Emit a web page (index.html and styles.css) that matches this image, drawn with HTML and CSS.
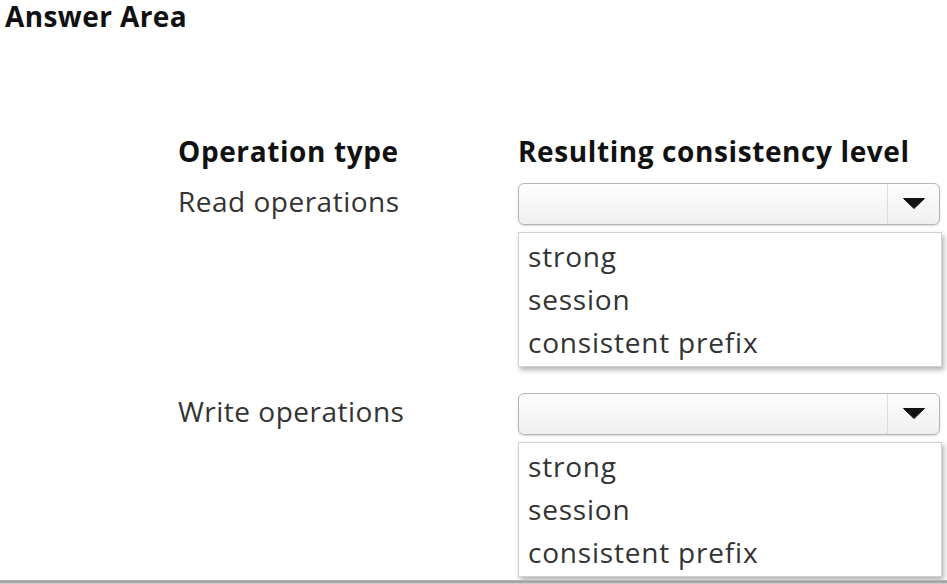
FILE: index.html
```html
<!DOCTYPE html>
<html>
<head>
<meta charset="utf-8">
<link rel="stylesheet" href="styles.css">
</head>
<body>
<div class="page">
  <h1 class="title">Answer Area</h1>
  <div class="grid">
    <div class="head">Operation type</div>
    <div class="head">Resulting consistency level</div>

    <div class="label">Read operations</div>
    <div class="group">
      <div class="select"><span class="value"></span><span class="btn"><svg width="22" height="11" viewBox="0 0 22 11"><path d="M0.5 0.5H21.5L11 10.5Z" fill="#111" stroke="#111" stroke-linejoin="round"/></svg></span></div>
      <ul class="list">
        <li>strong</li>
        <li>session</li>
        <li>consistent prefix</li>
      </ul>
    </div>

    <div class="label">Write operations</div>
    <div class="group">
      <div class="select"><span class="value"></span><span class="btn"><svg width="22" height="11" viewBox="0 0 22 11"><path d="M0.5 0.5H21.5L11 10.5Z" fill="#111" stroke="#111" stroke-linejoin="round"/></svg></span></div>
      <ul class="list">
        <li>strong</li>
        <li>session</li>
        <li>consistent prefix</li>
      </ul>
    </div>
  </div>
</div>
<div class="bottom-line"></div>
</body>
</html>
```

FILE: styles.css
```css
html, body {
  margin: 0;
  padding: 0;
  background: #fff;
  width: 947px;
  height: 584px;
  overflow: hidden;
  position: relative;
}
.page {
  font-family: "Open Sans", "Noto Sans", sans-serif;
  color: #222;
}
.title {
  margin: 0;
  padding: 0 0 0 5px;
  font-size: 28px;
  font-weight: 700;
  line-height: 32px;
  letter-spacing: 0.4px;
  color: #111;
}
.grid {
  display: grid;
  grid-template-columns: 340px 429px;
  margin: 101px 0 0 178px;
  align-items: start;
}
.head {
  font-size: 28px;
  font-weight: 700;
  line-height: 36px;
  letter-spacing: 0.6px;
  color: #111;
}
.label {
  font-size: 28px;
  line-height: 36px;
  letter-spacing: 0.5px;
  color: #333;
  margin-top: 14px;
}
.group {
  margin-top: 14px;
  margin-bottom: 12px;
}
.select {
  display: flex;
  height: 40px;
  width: 420px;
  border: 1px solid #b4b4b4;
  border-radius: 6px;
  background: linear-gradient(#fdfdfd, #f0f0f0);
  box-shadow: 0 1px 2px rgba(0,0,0,0.15);
}
.value { flex: 1; }
.btn {
  width: 51px;
  border-left: 1px solid #dcdcdc;
  display: flex;
  align-items: center;
  justify-content: center;
  padding-bottom: 1px;
}
.list {
  list-style: none;
  margin: 7px 0 0 0;
  padding: 2px 0 2px 9px;
  width: 413px;
  border: 1px solid #d0d0d0;
  background: #fff;
  box-shadow: 2px 3px 5px rgba(0,0,0,0.3);
}
.list li {
  font-size: 28px;
  line-height: 43px;
  letter-spacing: 0.8px;
  color: #333;
}
.bottom-line {
  position: absolute;
  left: 0;
  right: 0;
  bottom: 0;
  height: 4px;
  background: linear-gradient(#bbb, #999 50%, #ddd);
}
```
